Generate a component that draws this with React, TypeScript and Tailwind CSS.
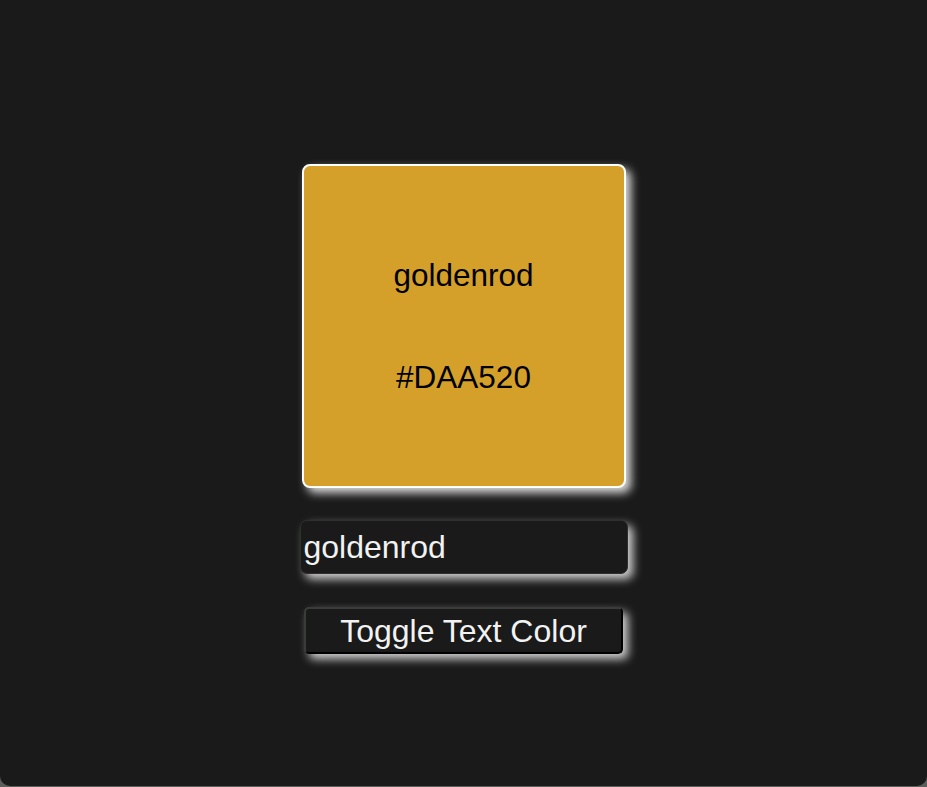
import React, { useState } from 'react';

export default function App() {
  const [name, setName] = useState('goldenrod');
  const [dark, setDark] = useState(true);

  return (
    <div className="bg-[#5b5e5b] min-h-[787px]" style={{ fontFamily: '"Liberation Sans", Arial, sans-serif' }}>
      <div className="h-[786px] bg-[#191a19] rounded-b-[10px] flex flex-col items-center pt-[164px]">
        {/* Swatch */}
        <div className="w-[324px] h-[324px] bg-[#d4a02a] border-2 border-white rounded-[8px] shadow-[5px_5px_10px_rgba(255,255,255,0.85)] flex flex-col items-center justify-center gap-[66px]">
          <div className={`text-[31.5px] leading-[36px] ${dark ? 'text-black' : 'text-white'}`}>goldenrod</div>
          <div className={`text-[31.5px] leading-[36px] ${dark ? 'text-black' : 'text-white'}`}>#DAA520</div>
        </div>

        {/* Input */}
        <input
          value={name}
          onChange={e => setName(e.target.value)}
          className="mt-[32px] w-[328px] h-[54px] bg-[#191a19] text-[#f2f2f2] text-[32px] pl-[3px] border border-[#2e302e] rounded-[7px] shadow-[5px_5px_10px_rgba(255,255,255,0.8)] outline-none"
        />

        {/* Button */}
        <button
          onClick={() => setDark(d => !d)}
          className="mt-[33px] w-[319px] h-[47px] bg-[#191a19] text-[#f2f2f2] text-[32px] leading-none border-2 border-t-[#3a3c3a] border-l-[#3a3c3a] border-r-black border-b-black rounded-[5px] shadow-[5px_5px_10px_rgba(255,255,255,0.8)]"
        >
          Toggle Text Color
        </button>
      </div>
    </div>
  );
}
